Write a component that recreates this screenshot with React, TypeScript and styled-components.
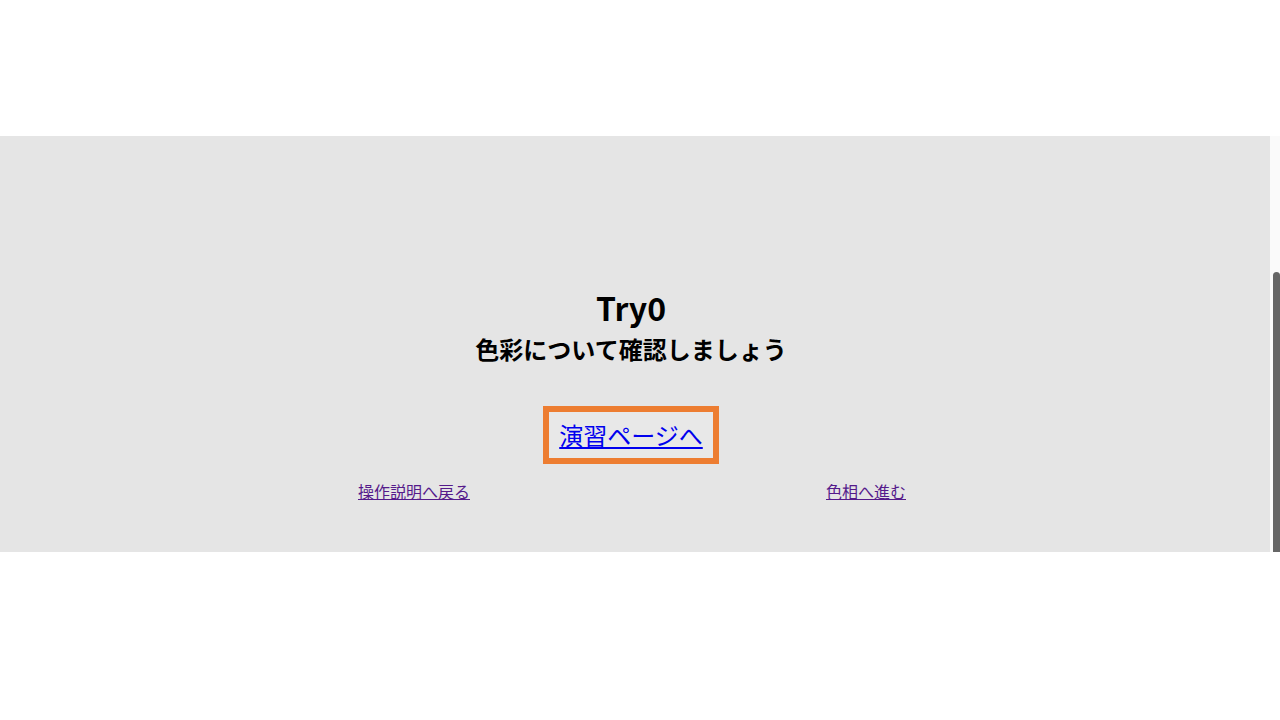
import React from 'react';
import styled, { createGlobalStyle } from 'styled-components';

const GlobalStyle = createGlobalStyle`
    html, body {
        margin: 0;
        padding: 0;
        background: #ffffff;
        font-family: "Noto Sans CJK JP", "Noto Sans", sans-serif;
    }
`;

const Page = styled.div`
    height: 720px;
    display: flex;
    flex-direction: column;
`;

const TopSpace = styled.div`
    height: 136px;
    flex: none;
`;

const Band = styled.section`
    height: 416px;
    flex: none;
    display: flex;
`;

const Viewport = styled.div`
    flex: 1;
    background: #e5e5e5;
    overflow: hidden;
    display: flex;
    flex-direction: column;
    justify-content: flex-end;
    align-items: center;
    padding: 0 8px 47px 0;
`;

const ScrollTrack = styled.div`
    width: 10px;
    flex: none;
    background: #fafafa;
    display: flex;
    flex-direction: column;
    justify-content: flex-end;
    padding-left: 3px;
    box-sizing: border-box;
`;

const ScrollThumb = styled.div`
    height: 280px;
    background: #666666;
    border-radius: 4px 4px 0 0;
`;

const Title = styled.h1`
    margin: 0;
    font-size: 32px;
    font-weight: 700;
    line-height: 48px;
    color: #000;
`;

const Subtitle = styled.h2`
    margin: 0;
    font-size: 24px;
    font-weight: 700;
    line-height: 36px;
    color: #000;
`;

const PracticeBox = styled.div`
    margin-top: 39px;
    border: 6px solid #ed7d31;
    padding: 5px 10px;
    background: #e8e8e8;
`;

const PracticeLink = styled.a`
    font-size: 24px;
    line-height: 36px;
    color: #0000ee;
    text-decoration: underline;
`;

const NavRow = styled.nav`
    margin-top: 13px;
    width: 904px;
    margin-left: 18px;
    display: grid;
    grid-template-columns: 1fr 1fr;
    justify-items: center;
`;

const NavLink = styled.a`
    font-size: 16px;
    line-height: 28px;
    color: #551a8b;
    text-decoration: underline;
`;

const App: React.FC = () => {
    return (
        <Page>
            <GlobalStyle />
            <TopSpace />
            <Band>
                <Viewport>
                    <Title>Try0</Title>
                    <Subtitle>色彩について確認しましょう</Subtitle>
                    <PracticeBox>
                        <PracticeLink href="#practice">演習ページへ</PracticeLink>
                    </PracticeBox>
                    <NavRow>
                        <NavLink href="#manual">操作説明へ戻る</NavLink>
                        <NavLink href="#hue">色相へ進む</NavLink>
                    </NavRow>
                </Viewport>
                <ScrollTrack>
                    <ScrollThumb />
                </ScrollTrack>
            </Band>
        </Page>
    );
};

export default App;
